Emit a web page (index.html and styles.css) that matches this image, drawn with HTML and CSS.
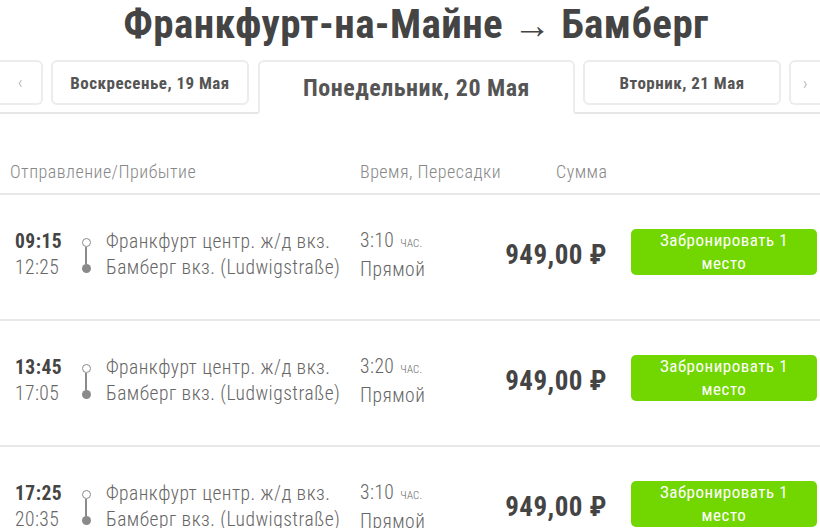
FILE: index.html
```html
<!DOCTYPE html>
<html lang="ru">
<head>
<meta charset="utf-8">
<title>Франкфурт-на-Майне → Бамберг</title>
<link rel="stylesheet" href="styles.css">
</head>
<body>
<div class="page">
  <h1 class="title">Франкфурт-на-Майне <span class="arr">→</span> Бамберг</h1>
  <nav class="dates">
    <div class="arrow arrow-left">‹</div>
    <div class="day">Воскресенье, 19 Мая</div>
    <div class="day day-active">Понедельник, 20 Мая</div>
    <div class="day">Вторник, 21 Мая</div>
    <div class="arrow arrow-right">›</div>
  </nav>
  <div class="head">
    <div class="c-route">Отправление/Прибытие</div>
    <div class="c-dur">Время, Пересадки</div>
    <div class="c-sum">Сумма</div>
  </div>
  <div class="trip">
    <div class="times"><b>09:15</b><span>12:25</span></div>
    <div class="line"><i class="dot-o"></i><i class="stem"></i><i class="dot-f"></i></div>
    <div class="stations"><span>Франкфурт центр. ж/д вкз.</span><span>Бамберг вкз. (Ludwigstraße)</span></div>
    <div class="dur"><span>3:10 <small>час.</small></span><span>Прямой</span></div>
    <div class="price">949,00 ₽</div>
    <button class="book">Забронировать 1 место</button>
  </div>
  <div class="trip">
    <div class="times"><b>13:45</b><span>17:05</span></div>
    <div class="line"><i class="dot-o"></i><i class="stem"></i><i class="dot-f"></i></div>
    <div class="stations"><span>Франкфурт центр. ж/д вкз.</span><span>Бамберг вкз. (Ludwigstraße)</span></div>
    <div class="dur"><span>3:20 <small>час.</small></span><span>Прямой</span></div>
    <div class="price">949,00 ₽</div>
    <button class="book">Забронировать 1 место</button>
  </div>
  <div class="trip">
    <div class="times"><b>17:25</b><span>20:35</span></div>
    <div class="line"><i class="dot-o"></i><i class="stem"></i><i class="dot-f"></i></div>
    <div class="stations"><span>Франкфурт центр. ж/д вкз.</span><span>Бамберг вкз. (Ludwigstraße)</span></div>
    <div class="dur"><span>3:10 <small>час.</small></span><span>Прямой</span></div>
    <div class="price">949,00 ₽</div>
    <button class="book">Забронировать 1 место</button>
  </div>
</div>
</body>
</html>
```
FILE: styles.css
```css
* { box-sizing: border-box; }
html, body { margin: 0; padding: 0; background: #fff; }
body {
  font-family: Roboto, "Noto Sans", sans-serif;
  font-stretch: 75%;
  letter-spacing: 0.03em;
  color: #555;
  overflow: hidden;
}
.page { width: 820px; }
.title {
  margin: 0;
  padding-top: 1px;
  height: 58px;
  text-align: center;
  font-size: 41px;
  letter-spacing: 0.01em;
  line-height: 46px;
  font-weight: 700;
  color: #444;
  padding-left: 12px;
}
.arr { font-weight: 300; font-stretch: 100%; font-size: 38px; }
.dates {
  display: flex;
  align-items: flex-start;
  height: 54px;
  border-bottom: 2px solid #e6e6e6;
  margin-top: 2px;
}
.arrow, .day {
  height: 45px;
  border: 2px solid #ececec;
  border-radius: 6px;
  display: flex;
  align-items: center;
  justify-content: center;
  font-weight: 700;
  font-size: 17px;
  color: #555;
}
.arrow { font-weight: 300; color: #aaa; font-size: 18px; }
.arrow-left { width: 43px; border-left: none; border-radius: 0 6px 6px 0; }
.arrow-right { margin-left: 8px; flex: 1; border-right: none; border-radius: 6px 0 0 6px; }
.day { width: 198px; margin-left: 8px; }
.day:last-of-type { width: 199px; }
.day-active {
  width: 317px;
  height: 54px;
  margin-left: 9px;
  margin-bottom: -2px;
  border-bottom: 2px solid #fff;
  border-radius: 6px 6px 0 0;
  font-size: 24px;
  padding-top: 2px;
}
.head {
  display: flex;
  height: 81px;
  padding-top: 46px;
  line-height: 24px;
  border-bottom: 2px solid #e8e8e8;
  font-size: 18px;
  font-weight: 300;
  color: #888;
}
.c-route { width: 360px; padding-left: 10px; }
.c-dur { width: 196px; }
.trip {
  display: flex;
  align-items: center;
  height: 126px;
  padding-bottom: 4px;
  border-bottom: 2px solid #e8e8e8;
  font-size: 19.5px;
  font-weight: 300;
  color: #666;
}
.times { display: flex; flex-direction: column; width: 78px; padding-left: 15px; line-height: 26px; }
.times b { font-weight: 700; color: #444; }
.line { width: 16px; display: flex; flex-direction: column; align-items: center; }
.dot-o { width: 9px; height: 9px; border: 1.5px solid #8a8a8a; border-radius: 50%; }
.stem { width: 1.5px; height: 17px; background: #8a8a8a; }
.dot-f { width: 9px; height: 9px; background: #8a8a8a; border-radius: 50%; }
.stations { display: flex; flex-direction: column; width: 266px; padding-left: 12px; line-height: 26px; }
.dur { display: flex; flex-direction: column; width: 130px; line-height: 26px; }
.dur small { font-size: 11px; text-transform: uppercase; letter-spacing: 0.02em; margin-left: 1px; }
.price { width: 120px; text-align: right; font-size: 27px; font-weight: 700; color: #444; padding-right: 3px; }
.book {
  margin-left: 21px;
  margin-bottom: 6px;
  width: 186px;
  height: 46px;
  border: none;
  border-radius: 5px;
  background: #72d600;
  color: #fff;
  font-family: inherit;
  font-stretch: 75%;
  letter-spacing: 0.03em;
  font-size: 17px;
  line-height: 23px;
  font-weight: 400;
  padding: 0 16px;
}
```
